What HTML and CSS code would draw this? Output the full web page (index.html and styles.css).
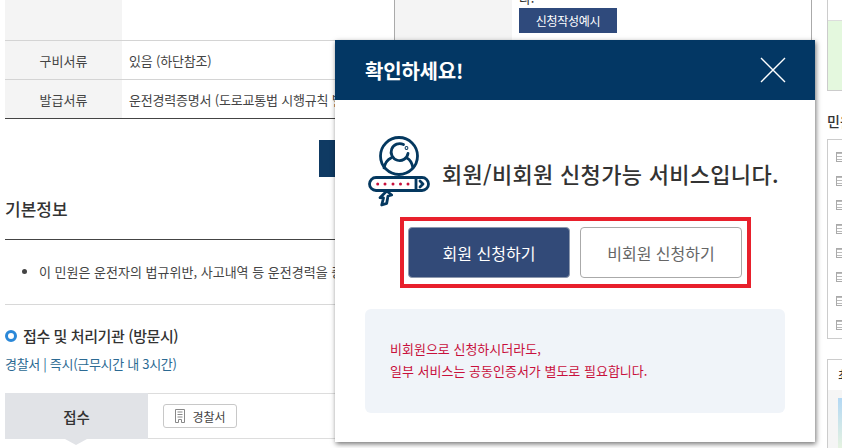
FILE: index.html
```html
<!DOCTYPE html>
<html lang="ko">
<head>
    <meta charset="UTF-8">
    <title>운전경력증명서 발급</title>
    <link rel="stylesheet" href="styles.css">
</head>
<body>
    <div class="page">
        <div class="content">
            <div class="info-table">
                <div class="row row-first">
                    <div class="label"></div>
                    <div class="value"></div>
                    <div class="label label-right"></div>
                    <div class="value value-right">
                        <div class="cut-text">다.</div>
                        <button class="example-btn">신청작성예시</button>
                    </div>
                </div>
                <div class="row row-mid">
                    <div class="label">구비서류</div>
                    <div class="value">있음 (하단참조)</div>
                    <div class="label label-right"></div>
                    <div class="value value-right"></div>
                </div>
                <div class="row row-last">
                    <div class="label">발급서류</div>
                    <div class="value">운전경력증명서 (도로교통법 시행규칙 별지 서식)</div>
                    <div class="label label-right"></div>
                    <div class="value value-right"></div>
                </div>
            </div>
            <div class="apply-bar"><span class="apply-btn"></span></div>
            <h2 class="section-title">기본정보</h2>
            <ul class="bullet-list">
                <li>이 민원은 운전자의 법규위반, 사고내역 등 운전경력을 증명하는 민원입니다.</li>
            </ul>
            <h3 class="sub-title"><span class="ring"></span>접수 및 처리기관 (방문시)</h3>
            <p class="office-link">경찰서 | 즉시(근무시간 내 3시간)</p>
            <div class="tab-row">
                <div class="tab-on">접수</div>
                <div class="tab-body">
                    <span class="office-btn">
                        <svg class="office-icon" width="12" height="16" viewBox="0 0 12 16" fill="none" stroke="#888" stroke-width="1">
                            <path d="M1.5 14.5V1.5h9v13h-3v-3h-3v3z"/>
                            <path d="M3.5 4h5M3.5 6.5h5M3.5 9h5"/>
                        </svg>
                        경찰서
                    </span>
                </div>
            </div>
        </div>
        <aside class="side">
            <div class="side-top"><div class="green-box"></div></div>
            <div class="side-title">민원</div>
            <div class="doc-box">
                <span class="doc"></span><span class="doc"></span><span class="doc"></span><span class="doc"></span>
                <span class="doc"></span><span class="doc"></span><span class="doc"></span><span class="doc"></span>
            </div>
            <div class="side-box2">
                <div class="side-box2-title">최근</div>
                <div class="side-box2-body"><span class="blue-strip"></span></div>
            </div>
        </aside>
    </div>

    <div class="modal">
        <div class="modal-head">
            <strong class="modal-title">확인하세요!</strong>
            <svg class="modal-close" width="26" height="26" viewBox="0 0 26 26" stroke="#fff" stroke-width="1.4" fill="none">
                <path d="M1 1l24 24M25 1L1 25"/>
            </svg>
        </div>
        <div class="modal-body">
            <div class="notice">
                <svg class="notice-icon" width="66" height="74" viewBox="0 0 66 74" fill="none" stroke="#04385f" stroke-width="2.8" stroke-linecap="round" stroke-linejoin="round">
                    <circle cx="32" cy="21" r="18.5"/>
                    <path d="M36.5 9.5a8.5 8.5 0 1 0 4.5 9"/>
                    <circle cx="39.5" cy="13" r="0.5"/>
                    <path d="M24 23c-4 2-6 5-7 10M40 23c4 2 5 5 6 10"/>
                    <rect x="2.5" y="42.5" width="59" height="13" rx="6.5"/>
                    <path d="M49 43v12"/>
                    <path d="M53 46l3 3-3 3"/>
                    <path d="M19.7 56L13 62.7l3.5.3-1.8 7 5-1.7L21 61l3.7-1z" fill="#fff"/>
                    <g fill="#c8103c" stroke="none">
                        <circle cx="10.7" cy="49" r="1.5"/><circle cx="18" cy="49" r="1.5"/><circle cx="26" cy="49" r="1.5"/><circle cx="33.5" cy="49" r="1.5"/><circle cx="41" cy="49" r="1.5"/>
                    </g>
                </svg>
                <p class="notice-text">회원/비회원 신청가능 서비스입니다.</p>
            </div>
            <div class="choice-frame">
                <button class="choice choice-member">회원 신청하기</button>
                <button class="choice choice-guest">비회원 신청하기</button>
            </div>
            <div class="guide-box">
                비회원으로 신청하시더라도,<br>
                일부 서비스는 공동인증서가 별도로 필요합니다.
            </div>
        </div>
    </div>
</body>
</html>
```

FILE: styles.css
```css
html, body {
    margin: 0;
    height: 448px;
    overflow: hidden;
    background: #fff;
}
body {
    font-family: "Noto Sans CJK KR", "Noto Sans", sans-serif;
    font-size: 13px;
    color: #444;
}
button {
    font-family: inherit;
}
.page {
    display: flex;
    height: 448px;
    padding-left: 5px;
    overflow: hidden;
}
.content {
    width: 807px;
    flex: none;
}
.side {
    width: 80px;
    flex: none;
    margin-left: 15px;
}

/* top table */
.row {
    display: grid;
    grid-template-columns: 117px 272px 118px 1fr;
    border-bottom: 1px solid #d4d4d4;
    box-sizing: border-box;
}
.row-first { height: 41px; }
.row-mid { height: 39px; }
.row-last { height: 39px; border-bottom-color: #444; }
.label {
    display: flex;
    align-items: center;
    justify-content: center;
    background: #f4f4f4;
}
.label-right {
    border-left: 1px solid #aaa;
}
.value {
    display: flex;
    align-items: center;
    padding-left: 7px;
    white-space: nowrap;
    overflow: hidden;
    letter-spacing: -0.2px;
}
.value-right {
    flex-direction: column;
    align-items: flex-start;
    border-right: 1px solid #aaa;
}
.cut-text {
    height: 13px;
    line-height: 13px;
    margin-top: -9px;
    color: #333;
}
.example-btn {
    width: 98px;
    height: 25px;
    margin-top: 4px;
    padding: 0;
    border: none;
    background: #2f4a7c;
    color: #fff;
    font-size: 12px;
    letter-spacing: -0.3px;
}

.apply-bar {
    display: flex;
    height: 37px;
    padding-top: 21px;
    padding-left: 314px;
}
.apply-btn {
    width: 60px;
    height: 37px;
    background: #0f3a63;
}

.section-title {
    height: 43px;
    margin: 0;
    padding-top: 19px;
    border-bottom: 1px solid #444;
    font-size: 17px;
    font-weight: 500;
    line-height: 26px;
    color: #333;
}
.bullet-list {
    margin: 0;
    height: 65px;
    padding: 22px 0 0 34px;
    box-sizing: border-box;
    border-bottom: 1px solid #d8d8d8;
    line-height: 20px;
    white-space: nowrap;
    overflow: hidden;
}
.sub-title {
    display: flex;
    align-items: center;
    margin: 19px 0 0;
    font-size: 15px;
    font-weight: 500;
    line-height: 24px;
    letter-spacing: -0.4px;
    color: #333;
}
.ring {
    width: 6px;
    height: 6px;
    margin-right: 6px;
    border: 3px solid #2b88d8;
    border-radius: 50%;
}
.office-link {
    margin: 6px 0 0;
    font-size: 13px;
    line-height: 20px;
    color: #2c6a93;
    letter-spacing: -0.3px;
}
.tab-row {
    display: flex;
    height: 46px;
    margin-top: 19px;
}
.tab-on {
    display: flex;
    align-items: center;
    justify-content: center;
    width: 143px;
    background: #e1e3e7;
    font-size: 14.5px;
    font-weight: 500;
    color: #333;
    position: relative;
}
.tab-on::after {
    content: "";
    position: absolute;
    left: 60px;
    bottom: -6px;
    border-left: 11px solid transparent;
    border-right: 11px solid transparent;
    border-top: 6px solid #e1e3e7;
}
.tab-body {
    display: flex;
    align-items: center;
    flex: 1;
    padding-left: 15px;
    border-top: 1px solid #ddd;
    border-bottom: 1px solid #ddd;
}
.office-btn {
    display: flex;
    align-items: center;
    justify-content: center;
    gap: 6px;
    width: 72px;
    height: 22px;
    border: 1px solid #c8c8c8;
    border-radius: 3px;
    font-size: 12px;
}

/* right column */
.side-top {
    height: 91px;
    border-left: 1px solid #ccc;
}
.green-box {
    height: 69px;
    position: relative;
    top: 20px;
    background: #e4f8de;
    border-bottom: 1px solid #ccc;
    border-top: 1px solid #ddd;
}
.side-title {
    margin-top: 19px;
    font-size: 14px;
    font-weight: 500;
    line-height: 22px;
    color: #333;
}
.doc-box {
    display: flex;
    flex-direction: column;
    gap: 14px;
    height: 200px;
    margin-top: 7px;
    padding: 12px 0 0 8px;
    box-sizing: border-box;
    border: 1px solid #ccc;
    border-right: none;
}
.doc {
    display: block;
    width: 8px;
    height: 8px;
    border: 1px solid #aaa;
    background: repeating-linear-gradient(#bbb 0 1px, #fff 1px 3px);
}
.side-box2 {
    margin-top: 20px;
    height: 90px;
    border: 1px solid #ccc;
    border-right: none;
}
.side-box2-title {
    height: 30px;
    padding-left: 10px;
    font-size: 13px;
    font-weight: 500;
    line-height: 30px;
    color: #333;
}
.side-box2-body {
    height: 60px;
    padding: 8px 0 0 10px;
    background: #f5f5f5;
}
.blue-strip {
    display: block;
    height: 52px;
    background: linear-gradient(#b3d8f4, #e8f4e0);
}

/* modal */
.modal {
    position: absolute;
    left: 335px;
    top: 40px;
    width: 480px;
    height: 402px;
    background: #fff;
    box-shadow: 1px 2px 5px rgba(0, 0, 0, 0.55);
}
.modal-head {
    display: flex;
    align-items: center;
    justify-content: space-between;
    height: 60px;
    padding: 0 29px 0 30px;
    background: #033764;
}
.modal-title {
    font-size: 20px;
    font-weight: 700;
    color: #fff;
    letter-spacing: -0.2px;
}
.modal-body {
    padding: 0 30px;
}
.notice {
    display: flex;
    align-items: flex-start;
    height: 117px;
    margin: 0 -5px 0 2px;
}
.notice-icon {
    flex: none;
    margin-top: 35px;
}
.notice-text {
    margin: 59px 0 0 9px;
    font-size: 22px;
    font-weight: 500;
    line-height: 28px;
    color: #333;
    white-space: nowrap;
    letter-spacing: 0.3px;
}
.choice-frame {
    display: flex;
    gap: 10px;
    width: 351px;
    height: 71px;
    margin-left: 35px;
    padding: 6px 0 0 4px;
    box-sizing: border-box;
    border: 4px solid #e8202c;
}
.choice {
    width: 162px;
    height: 51px;
    padding: 0;
    border-radius: 4px;
    font-size: 16px;
}
.choice-member {
    background: #324a78;
    border: 1px solid #8d99ae;
    color: #fff;
}
.choice-guest {
    background: #fff;
    border: 1px solid #aaa;
    color: #666;
}
.guide-box {
    margin-top: 21px;
    height: 104px;
    padding: 29px 25px 0;
    box-sizing: border-box;
    background: #f0f4f9;
    border-radius: 6px;
    font-size: 13px;
    line-height: 22px;
    color: #c8103c;
}
```
